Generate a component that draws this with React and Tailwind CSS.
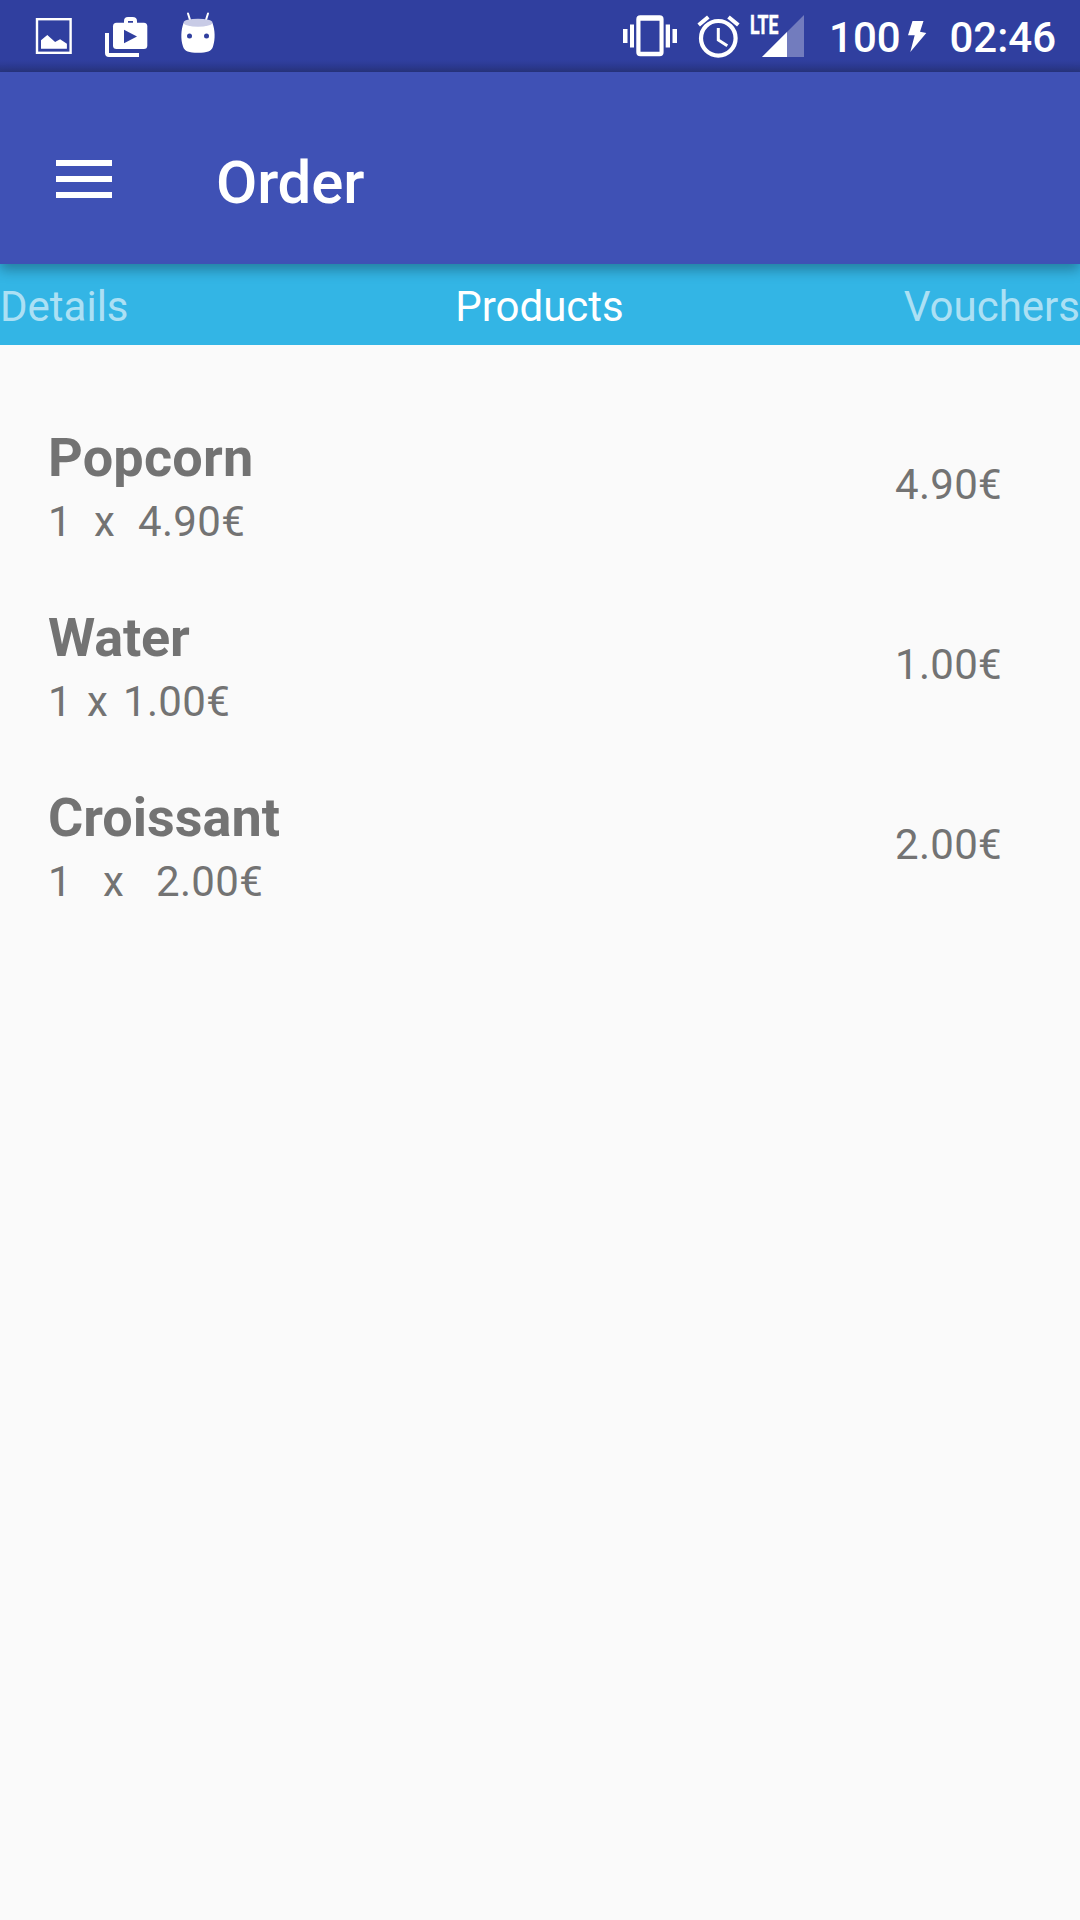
const products = [
  { name: 'Popcorn', price: '4.90€', xGap: 'ml-[22px]', priceGap: 'ml-[23px]', tracking: 'tracking-[0.2px]' },
  { name: 'Water', price: '1.00€', xGap: 'ml-[15px]', priceGap: 'ml-[15px]', tracking: 'tracking-[-0.2px]' },
  { name: 'Croissant', price: '2.00€', xGap: 'ml-[31px]', priceGap: 'ml-[32px]', tracking: 'tracking-normal' },
];

function NotificationIcons() {
  return (
    <svg className="block h-[72px] w-[240px]" viewBox="0 0 240 72" fill="none" aria-hidden="true">
      <rect x="37" y="19.2" width="33.6" height="33.6" stroke="#fff" strokeWidth="2.4" />
      <path d="M41 48.7v-8.4l6.3-5.3 7.8 7 5-2.8 6.8 4.5v5z" fill="#fff" />
      <path d="M105 33h4v20h30v4h-30a4 4 0 0 1-4-4z" fill="#fff" />
      <path d="M126 24v-3q0-2 2-2h4.5q2.500 0 2.500 2v3" stroke="#fff" strokeWidth="4" />
      <rect x="113" y="22.7" width="34.3" height="26.3" rx="3.5" fill="#fff" />
      <path d="M124 29.700v13.600l13-6.800z" fill="#303f9f" />
      <path d="m188 13.500 2.500 8M208 13.500l-2.500 8" stroke="#fff" strokeWidth="2" strokeLinecap="round" />
      <path d="M183.500 23C181 30 180.500 39 183 46.500c1.500 5 6 6.300 15 6.300s13.500-1.300 15-6.300c2.500-7.500 2-16.500-.5-23.500z" fill="#fff" />
      <ellipse cx="198" cy="22.7" rx="14.5" ry="4" fill="#c8cbe6" />
      <circle cx="189.5" cy="36" r="2.5" fill="#303f9f" />
      <circle cx="206.5" cy="36" r="2.5" fill="#303f9f" />
    </svg>
  );
}

function SystemIcons() {
  return (
    <svg className="block h-[72px] w-[190px]" viewBox="620 0 190 72" fill="none" aria-hidden="true">
      <path fill="#fff" d="M623 29h4.500v14H623zM630 24.500h4v23h-4zM665.700 24.500h4.300v23h-4.300zM672.500 29h4.500v14h-4.500z" />
      <path fill="#fff" fillRule="evenodd" d="M640.300 15.300h19.300a4 4 0 0 1 4 4v33a4 4 0 0 1-4 4h-19.300a4 4 0 0 1-4-4v-33a4 4 0 0 1 4-4zM640.500 20.700v31h19v-31z" />
      <circle cx="718.3" cy="38.3" r="17.3" stroke="#fff" strokeWidth="4.2" />
      <path d="M718.300 28v12l9 5.700" stroke="#fff" strokeWidth="3" />
      <path d="m698.700 25 9.600-8M728.500 17l9.800 8" stroke="#fff" strokeWidth="4" />
      <path d="M762 57l42-42v42z" fill="#fff" fillOpacity=".32" />
      <path d="M762 57l25-25v25z" fill="#fff" />
      <text x="750" y="33.5" fill="#fff" stroke="#fff" strokeWidth=".5" fontFamily="Roboto" fontSize="26" fontWeight="700" textLength="28.5" lengthAdjust="spacingAndGlyphs">LTE</text>
    </svg>
  );
}

function StatusBar() {
  return (
    <div className="flex h-[72px] items-start justify-between bg-[linear-gradient(to_bottom,#303f9f_60px,#2c3a92_66px,#28357f_72px)] pr-[24px]">
      <NotificationIcons />
      <div className="flex items-start text-[42px] leading-[50px] font-medium text-white">
        <SystemIcons />
        <span className="mt-[13px] ml-[18.6px]">100</span>
        <svg className="ml-[7px] block h-[72px] w-[20px]" viewBox="908 0 20 72" aria-hidden="true">
          <path fill="#fff" d="M912.500 21h11l-3.500 10.700 6.300 1.300-16 19 4.400-16.700H908z" />
        </svg>
        <span className="mt-[13px] ml-[21.8px]">02:46</span>
      </div>
    </div>
  );
}

function AppBar() {
  return (
    <header className="relative z-10 flex h-[192px] items-start bg-[#3f51b5] shadow-[0_6px_12px_rgba(0,0,0,0.3)]">
      <button className="mt-[88px] ml-[56px] flex w-[56px] flex-col gap-[10px]" aria-label="Menu">
        <span className="block h-[6px] w-full bg-white" />
        <span className="block h-[6px] w-full bg-white" />
        <span className="block h-[6px] w-full bg-white" />
      </button>
      <h1 className="mt-[76px] ml-[104px] text-[60px] leading-[70px] font-medium tracking-[-0.2px] text-white">Order</h1>
    </header>
  );
}

function Tabs() {
  return (
    <nav className="grid h-[81px] grid-cols-3 bg-[#33b5e5] pt-[18px] text-[42px] leading-[50px] text-white/60">
      <span>Details</span>
      <span className="pr-px text-center text-white">Products</span>
      <span className="text-right">Vouchers</span>
    </nav>
  );
}

function ProductRow({ name, price, xGap, priceGap, tracking }) {
  return (
    <li className="flex h-[180px] items-start justify-between pr-[78px] pl-[48px]">
      <div>
        <div className={`text-[54px] leading-[64px] font-bold ${tracking}`}>{name}</div>
        <div className="mt-[7px] flex text-[42px] leading-[50px] tracking-[0.3px]">
          <span>1</span>
          <span className={xGap}>x</span>
          <span className={priceGap}>{price}</span>
        </div>
      </div>
      <span className="mt-[34px] text-[42px] leading-[50px] tracking-[0.3px]">{price}</span>
    </li>
  );
}

export default function App() {
  return (
    <div className="h-[1920px] w-[1080px] overflow-hidden bg-[#fafafa] font-['Roboto',sans-serif] text-[#737373]">
      <StatusBar />
      <AppBar />
      <Tabs />
      <ul className="pt-[81px]">
        {products.map((product) => (
          <ProductRow key={product.name} {...product} />
        ))}
      </ul>
    </div>
  );
}
